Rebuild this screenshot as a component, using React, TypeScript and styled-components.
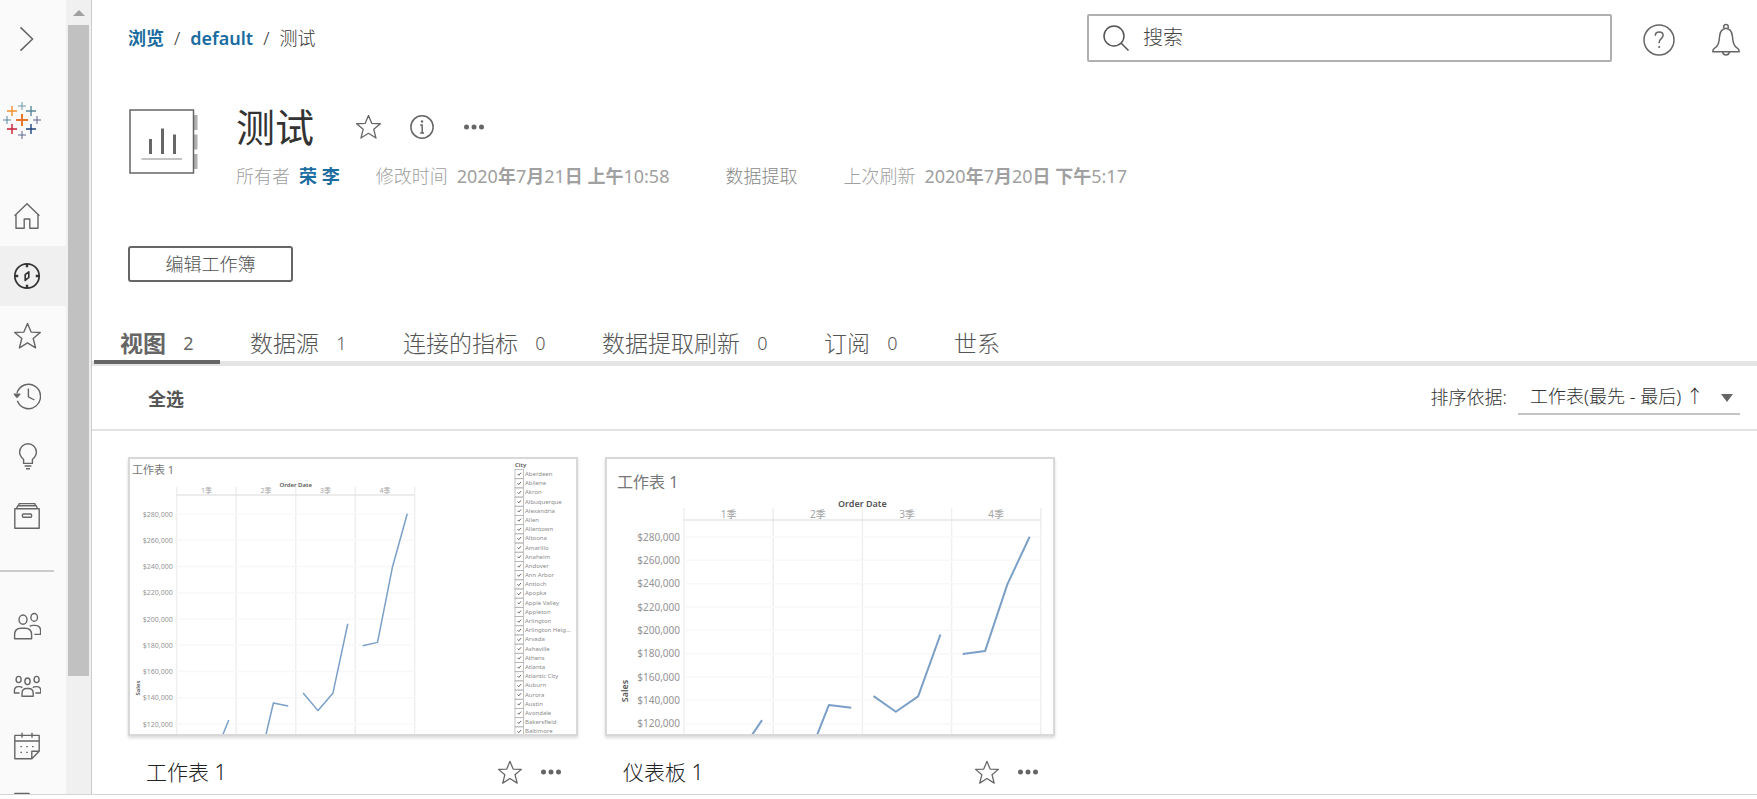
import React from "react";
import styled, { createGlobalStyle } from "styled-components";

const GlobalStyle = createGlobalStyle`
  *, *::before, *::after { box-sizing: border-box; }
  body {
    margin: 0;
    background: #fff;
    color: #333;
    font-family: "Noto Sans", "Noto Sans CJK SC", sans-serif;
    font-size: 18px;
    line-height: 24px;
  }
  button, input, select { font: inherit; color: inherit; }
  ul, ol { list-style: none; margin: 0; padding: 0; }
`;

const Frame = styled.div`
  display: flex;
  height: calc(100vh - 4px);
  overflow: hidden;
  border-bottom: 1px solid #d4d4d4;
`;

const Sidebar = styled.nav`
  display: flex;
  flex: none;
  width: 92px;
  border-right: 1px solid #ccc;
`;

const SideContent = styled.div`
  flex: 1;
  overflow: hidden;
  background: #fafafa;
`;

const IconButton = styled.button`
  display: flex;
  align-items: center;
  justify-content: center;
  flex: none;
  padding: 0;
  border: 0;
  background: none;
  color: #666;
`;

const SideToggle = styled(IconButton)`
  width: 54px;
  height: 78px;
`;

const LogoLink = styled.a`
  display: flex;
  align-items: center;
  height: 108px;
  padding-bottom: 24px;
`;

const SideItem = styled.a<{ $current?: boolean }>`
  display: flex;
  align-items: center;
  height: 60px;
  padding-left: 13px;
  color: ${(p) => (p.$current ? "#333" : "#666")};
  background: ${(p) => (p.$current ? "#f0f0f0" : "transparent")};
`;

const SideDivider = styled.hr`
  width: 54px;
  height: 2px;
  margin: 24px 0;
  border: 0;
  background: #ccc;
`;

const ScrollTrack = styled.div`
  display: flex;
  flex-direction: column;
  flex: none;
  width: 25px;
  padding: 0 2px;
  background: #f0f0f0;
`;

const ScrollArrow = styled.div`
  display: flex;
  align-items: center;
  justify-content: center;
  height: 25px;
`;

const ScrollThumb = styled.div`
  width: 21px;
  height: 82%;
  background: #c1c1c1;
`;

const Main = styled.main`
  flex: 1;
  min-width: 0;
`;

const TopBar = styled.header`
  display: flex;
  align-items: center;
  padding: 14px 17px 0 36px;
`;

const Crumbs = styled.ol`
  display: flex;
  gap: 10px;
  margin-right: auto;
  color: #333;
  font-weight: 300;
`;

const BlueLink = styled.a`
  color: #1b6ca1;
  font-weight: 600;
  text-decoration: none;
`;

const SearchBox = styled.label`
  display: flex;
  align-items: center;
  gap: 14px;
  flex: 0 1 525px;
  height: 48px;
  padding: 0 14px;
  border: 2px solid #b0b0b0;
  border-radius: 2px;
  color: #555;
`;

const SearchInput = styled.input`
  flex: 1;
  min-width: 0;
  padding: 0;
  border: 0;
  outline: 0;
  background: none;
  font-size: 20px;
  font-weight: 300;
  &::placeholder { color: #444; opacity: 1; }
`;

const TopIcon = styled(IconButton)`
  margin-left: 31px;
  padding-top: 4px;
`;

const WorkbookHeader = styled.section`
  display: flex;
  gap: 38px;
  padding: 45px 36px 0;
`;

const WorkbookIcon = styled.svg`
  flex: none;
  margin-top: 2px;
`;

const TitleLine = styled.div`
  display: flex;
  align-items: center;
  gap: 28px;
`;

const Title = styled.h1`
  margin: 0 13px 0 0;
  font-size: 39px;
  font-weight: 400;
  line-height: 40px;
`;

const Meta = styled.dl`
  display: flex;
  flex-wrap: wrap;
  margin: 17px 0 0;
  color: #a0a0a0;
`;

const MetaItem = styled.div<{ $after: number }>`
  display: flex;
  gap: 9px;
  margin-right: ${(p) => p.$after}px;
`;

const Term = styled.dt<{ $dark?: boolean }>`
  color: ${(p) => (p.$dark ? "#888" : "#a0a0a0")};
  font-weight: 300;
`;

const Detail = styled.dd`
  margin: 0;
`;

const Strong = styled.b`
  font-weight: 600;
`;

const EditButton = styled.button`
  display: block;
  width: 165px;
  height: 36px;
  margin: 58px 36px 36px;
  padding: 0;
  border: 2px solid #666;
  border-radius: 3px;
  background: #fff;
  color: #555;
  font-weight: 300;
`;

const Tabs = styled.div`
  display: flex;
  gap: 4px;
  height: 48px;
  padding-left: 2px;
  border-bottom: 5px solid #e5e5e5;
`;

const Tab = styled.button<{ $active?: boolean }>`
  display: flex;
  align-items: center;
  gap: 17px;
  height: 46px;
  padding: 8px 26px 0;
  border: 0;
  border-bottom: 4px solid ${(p) => (p.$active ? "#666" : "transparent")};
  background: none;
  color: ${(p) => (p.$active ? "#666" : "#555")};
  font-size: 23px;
  font-weight: ${(p) => (p.$active ? 600 : 300)};
  white-space: nowrap;
`;

const TabCount = styled.span<{ $active?: boolean }>`
  min-width: 11px;
  font-size: 18px;
  font-weight: ${(p) => (p.$active ? 400 : 300)};
`;

const Toolbar = styled.div`
  display: flex;
  align-items: center;
  justify-content: space-between;
  height: 65px;
  padding: 0 17px 2px 56px;
  border-bottom: 2px solid #e2e2e2;
`;

const SelectAll = styled.button`
  padding: 4px 0 0;
  border: 0;
  background: none;
  color: #555;
  font-weight: 600;
`;

const SortField = styled.div`
  display: flex;
  align-items: center;
  gap: 11px;
  font-weight: 300;
`;

const SelectWrap = styled.div`
  display: flex;
  align-items: center;
  width: 222px;
  height: 36px;
  border-bottom: 2px solid #c4c4c4;
`;

const Select = styled.select`
  flex: 1;
  min-width: 0;
  height: 34px;
  margin-right: -20px;
  padding: 0 20px 0 12px;
  border: 0;
  appearance: none;
  background: none;
  font-weight: 300;
`;

const Caret = styled.svg`
  flex: none;
  margin: 4px 7px 0 0;
  pointer-events: none;
`;

const Cards = styled.ul`
  display: flex;
  flex-wrap: wrap;
  gap: 27px;
  padding: 26px 36px;
`;

const Card = styled.li`
  width: 450px;
`;

const Thumb = styled.a`
  display: block;
  height: 279px;
  border: 2px solid #d8d8d8;
  box-shadow: 0 2px 3px rgba(0, 0, 0, 0.15);
`;

const ThumbArt = styled.svg`
  display: block;
  width: 100%;
  height: 100%;
  fill: #8c8c8c;
`;

const Caption = styled.div`
  display: flex;
  align-items: center;
  gap: 18px;
  height: 72px;
  padding: 0 16px 0 18px;
`;

const CardName = styled.a`
  margin-right: auto;
  color: #222;
  font-size: 21px;
  font-weight: 300;
  text-decoration: none;
`;

type IconProps = { size?: number; children: React.ReactNode };

const Icon = ({ size = 28, children }: IconProps) => (
  <svg
    width={size}
    height={size}
    viewBox="0 0 28 28"
    fill="none"
    stroke="currentColor"
    strokeWidth="1.4"
    strokeLinejoin="round"
    aria-hidden="true"
  >
    {children}
  </svg>
);

const starPath =
  "M14.5 1.5l3.6 8.6 9.2.4-7.1 6 2.4 9.4-8.1-5.1-8.1 5.1 2.4-9.4-7.1-6 9.2-.4z";

const StarIcon = ({ size }: { size?: number }) => (
  <Icon size={size}>
    <path d={starPath} />
  </Icon>
);

const InfoIcon = () => (
  <Icon size={26}>
    <circle cx="14" cy="14" r="12" strokeWidth="1.6" />
    <path d="M12 11.8h2.200v8.600M12 20.4h4.200" strokeWidth="1.6" />
    <circle cx="14" cy="8" r="1.3" fill="currentColor" stroke="none" />
  </Icon>
);

const DotsIcon = () => (
  <svg width="22" height="22" viewBox="0 0 22 22" fill="currentColor" aria-hidden="true">
    <circle cx="3.500" cy="11" r="2.500" />
    <circle cx="11" cy="11" r="2.500" />
    <circle cx="18.500" cy="11" r="2.500" />
  </svg>
);

const HomeIcon = () => (
  <Icon>
    <path d="M1.6 13.8L14 1.8l12.4 12M3 12.6v13.6h8.2V17h5.6v9.2H25V12.6" />
  </Icon>
);

const CompassIcon = () => (
  <Icon>
    <circle cx="14" cy="14" r="12.2" strokeWidth="1.7" />
    <path d="M14 2v3.2M14 22.8V26M2 14h3.2M22.8 14H26" strokeWidth="2.4" />
    <path d="M15.8 9.8v5.6l-3.6 3v-5.8z" strokeWidth="1.7" />
  </Icon>
);

const HistoryIcon = () => (
  <Icon>
    <path d="M4 11a12 12.2 0 1 1 .3 7.8" />
    <path d="M1.4 12.2h5.4L4 15.2z" fill="currentColor" />
    <path d="M15.4 6.4v8.4l6 3.2" />
  </Icon>
);

const BulbIcon = () => (
  <Icon>
    <path d="M10.6 21.4v-4c-2.2-2-4-3.800-4-7.200a8.400 8.400 0 0 1 16.800 0c0 3.400-1.800 5.200-4 7.200v4z" />
    <path d="M11.600 24h6.800M13 26.800h4" />
  </Icon>
);

const ArchiveIcon = () => (
  <Icon>
    <path d="M1.800 6.800h24.400v19.400H1.800zM3.400 6.800l1.400-3h18.400l1.400 3M5.400 3.800l.8-2.200h15.600l.8 2.200" />
    <rect x="9.400" y="12" width="9.200" height="3.200" rx="1" />
  </Icon>
);

const UsersIcon = () => (
  <Icon>
    <ellipse cx="10" cy="7.600" rx="4" ry="4.600" />
    <ellipse cx="21.200" cy="5.400" rx="3.300" ry="3.900" />
    <path d="M1.600 26.800v-4c0-4.400 2.600-6.600 6.400-6.600h4.200c3.800 0 6.400 2.200 6.400 6.600v4z" />
    <path d="M16.800 14.200c1-.6 2.200-.8 3.400-.8h1.600c3.600 0 5.800 1.600 5.800 5.400v3.600h-6.200" />
  </Icon>
);

const GroupsIcon = () => (
  <Icon>
    <ellipse cx="14.500" cy="9.300" rx="2.600" ry="3.300" />
    <ellipse cx="5.600" cy="7.500" rx="2.500" ry="3.100" />
    <ellipse cx="23.600" cy="7.500" rx="2.500" ry="3.100" />
    <path d="M9 24.300v-2.800c0-3.400 1.800-5 4.600-5h2c2.800 0 4.600 1.600 4.600 5v2.800z" />
    <path d="M9.400 15.600c-1-.8-2-1-3-1h-1c-2.600 0-4 1.600-4 4.200v2.200h5.200M19.800 15.600c1-.8 2-1 3-1h1c2.600 0 4 1.600 4 4.200v2.200h-5.400" />
  </Icon>
);

const CalendarIcon = () => (
  <Icon>
    <path d="M18.800 26.800h-17V3.400h24.400v15.800zM18.800 26.800v-7.600h7.400M1.800 9h24.400M9 .8v5M19 .8v5" />
    <path d="M7.400 14.600h1.600M13.200 14.600h1.600M19 14.600h1.600M7.400 20.400h1.600M13.200 20.400h1.600" />
  </Icon>
);

const DocumentIcon = () => (
  <Icon>
    <path d="M1.800 26V1.500h14l3 3V26z" />
  </Icon>
);

const LogoMark = () => {
  const marks: [number, number, number, number, string][] = [
    [22, 20, 6, 2, "#e8762d"],
    [12, 11, 5, 1.4, "#eb912c"],
    [31, 11, 5, 1.4, "#59879b"],
    [12, 29, 5, 1.4, "#c72037"],
    [31, 29, 5, 1.4, "#1f447e"],
    [22, 6, 4, 1, "#7199a6"],
    [7, 20, 4, 1, "#59879b"],
    [37, 20, 4, 1, "#5b6591"],
    [22, 35, 4, 1, "#5b6591"],
  ];
  return (
    <svg width="44" height="40" viewBox="0 0 44 40" fill="none" aria-hidden="true">
      {marks.map(([x, y, r, w, color], i) => (
        <path key={i} d={`M${x - r} ${y}h${2 * r}M${x} ${y - r}v${2 * r}`} stroke={color} strokeWidth={w} />
      ))}
    </svg>
  );
};

const quarters: { label: string; sales: number[]; from: number }[] = [
  { label: "1季", sales: [94900, 123000], from: 2 },
  { label: "2季", sales: [87700, 136000, 133700], from: 1 },
  { label: "3季", sales: [143600, 130200, 143400, 196400], from: 0 },
  { label: "4季", sales: [179700, 182200, 239400, 280200], from: 0 },
];

const ticks = [280, 260, 240, 220, 200, 180, 160, 140, 120];

const cities = [
  "Aberdeen", "Abilene", "Akron", "Albuquerque", "Alexandria", "Allen", "Allentown",
  "Altoona", "Amarillo", "Anaheim", "Andover", "Ann Arbor", "Antioch", "Apopka",
  "Apple Valley", "Appleton", "Arlington", "Arlington Heig...", "Arvada", "Asheville",
  "Athens", "Atlanta", "Atlantic City", "Auburn", "Aurora", "Austin", "Avondale",
  "Bakersfield", "Baltimore",
];

type ChartProps = {
  left: number;
  column: number;
  top: number;
  rule: number;
  first: number;
  step: number;
  labelSize: number;
  headSize: number;
  titleSize: number;
  title: [number, number];
  side: [number, number];
  line: number;
};

const SalesChart = (c: ChartProps) => {
  const right = c.left + 4 * c.column;
  const yOf = (sales: number) => c.first + ((280000 - sales) / 20000) * c.step;
  return (
    <g>
      <g stroke="#efefef" strokeWidth="1.500">
        {[0, 1, 2, 3, 4].map((i) => (
          <path key={i} d={`M${c.left + i * c.column} ${c.top}V275`} />
        ))}
        <path d={`M${c.left} ${c.rule}H${right}`} stroke="#e6e6e6" />
        {ticks.map((t) => (
          <path key={t} d={`M${c.left} ${yOf(t * 1000)}H${right}`} stroke="#f8f8f8" />
        ))}
      </g>
      <text x={c.title[0]} y={c.title[1]} fontSize={c.titleSize} fill="#777">
        工作表 1
      </text>
      <text
        x={c.left + 2 * c.column}
        y={c.top + 0.5 - c.headSize / 6}
        fontSize={c.headSize}
        fontWeight="600"
        fill="#555"
        textAnchor="middle"
      >
        Order Date
      </text>
      {quarters.map((q, i) => (
        <text
          key={q.label}
          x={c.left + (i + 0.5) * c.column}
          y={c.rule - 2}
          fontSize={c.labelSize}
          fill="#a4a4a4"
          textAnchor="middle"
        >
          {q.label}
        </text>
      ))}
      {ticks.map((t) => (
        <text
          key={t}
          x={c.left - 4}
          y={yOf(t * 1000) + c.labelSize * 0.36}
          fontSize={c.labelSize}
          fill="#949494"
          textAnchor="end"
        >
          {`$${t},000`}
        </text>
      ))}
      <text
        transform={`translate(${c.side[0]} ${c.side[1]}) rotate(-90)`}
        fontSize={c.headSize}
        fontWeight="600"
        fill="#555"
        textAnchor="middle"
      >
        Sales
      </text>
      {quarters.map((q, i) => (
        <polyline
          key={q.label}
          fill="none"
          stroke="#7b9fc6"
          strokeWidth={c.line}
          strokeLinejoin="round"
          points={q.sales
            .map((v, k) => `${c.left + (i + 0.125 + 0.25 * (k + q.from)) * c.column},${yOf(v)}`)
            .join(" ")}
        />
      ))}
    </g>
  );
};

const CityFilter = () => (
  <g fontSize="6">
    <text x="385" y="8" fontWeight="600" fill="#555">
      City
    </text>
    {cities.map((city, i) => {
      const y = 15 + i * 9.19;
      return (
        <g key={city}>
          <rect x="385" y={y - 4.5} width="8.5" height="9.19" fill="none" stroke="#b4b4b4" strokeWidth="0.8" />
          <path d={`M387.5 ${y}l1.3 1.3 2.2-2.6`} fill="none" stroke="#555" strokeWidth="0.9" />
          <text x="395" y={y + 2}>
            {city}
          </text>
        </g>
      );
    })}
  </g>
);

const sideItems = [
  { label: "主页", icon: <HomeIcon /> },
  { label: "浏览", icon: <CompassIcon />, current: true },
  { label: "收藏夹", icon: <StarIcon /> },
  { label: "最近", icon: <HistoryIcon /> },
  { label: "建议", icon: <BulbIcon /> },
  { label: "集合", icon: <ArchiveIcon /> },
];

const adminItems = [
  { label: "用户", icon: <UsersIcon /> },
  { label: "群组", icon: <GroupsIcon /> },
  { label: "计划", icon: <CalendarIcon /> },
  { label: "任务", icon: <DocumentIcon /> },
];

const tabs: { label: string; count?: number }[] = [
  { label: "视图", count: 2 },
  { label: "数据源", count: 1 },
  { label: "连接的指标", count: 0 },
  { label: "数据提取刷新", count: 0 },
  { label: "订阅", count: 0 },
  { label: "世系" },
];

const ViewCard = ({ name, children }: { name: string; children: React.ReactNode }) => (
  <Card>
    <Thumb href="#" aria-label={name}>
      <ThumbArt viewBox="0 0 446 275">{children}</ThumbArt>
    </Thumb>
    <Caption>
      <CardName href="#">{name}</CardName>
      <IconButton aria-label="收藏">
        <StarIcon size={25} />
      </IconButton>
      <IconButton aria-label="更多操作">
        <DotsIcon />
      </IconButton>
    </Caption>
  </Card>
);

export default function App() {
  return (
    <>
      <GlobalStyle />
      <Frame>
        <Sidebar aria-label="导航">
          <SideContent>
            <SideToggle aria-label="展开">
              <Icon size={26}>
                <path d="M7 1.5l13 12.5L7 26.5" strokeWidth="1.7" />
              </Icon>
            </SideToggle>
            <LogoLink href="#" aria-label="主页">
              <LogoMark />
            </LogoLink>
            {sideItems.map((item) => (
              <SideItem key={item.label} href="#" aria-label={item.label} $current={item.current}>
                {item.icon}
              </SideItem>
            ))}
            <SideDivider />
            {adminItems.map((item) => (
              <SideItem key={item.label} href="#" aria-label={item.label}>
                {item.icon}
              </SideItem>
            ))}
          </SideContent>
          <ScrollTrack aria-hidden="true">
            <ScrollArrow>
              <svg width="12" height="6" viewBox="0 0 12 6" fill="#a0a0a0">
                <path d="M0 6L6 0l6 6z" />
              </svg>
            </ScrollArrow>
            <ScrollThumb />
          </ScrollTrack>
        </Sidebar>
        <Main>
          <TopBar>
            <Crumbs>
              <li><BlueLink href="#">浏览</BlueLink></li>
              <li aria-hidden="true">/</li>
              <li><BlueLink href="#">default</BlueLink></li>
              <li aria-hidden="true">/</li>
              <li>测试</li>
            </Crumbs>
            <SearchBox>
              <svg width="26" height="26" viewBox="0 0 26 26" fill="none" stroke="currentColor" strokeWidth="1.5" aria-hidden="true">
                <circle cx="11" cy="11" r="10" />
                <path d="M18.2 18.2l7.3 7.3" />
              </svg>
              <SearchInput type="search" placeholder="搜索" aria-label="搜索" />
            </SearchBox>
            <TopIcon aria-label="帮助">
              <svg width="32" height="32" viewBox="0 0 32 32" fill="none" stroke="currentColor" strokeWidth="1.5" aria-hidden="true">
                <circle cx="16" cy="16" r="15" />
                <path d="M12.3 11.8c0-2.4 1.6-3.7 3.9-3.7 2.4 0 3.9 1.4 3.9 3.4 0 3-3.9 3.4-3.9 6.8v.9" />
                <path d="M15.3 23h1.8" strokeWidth="1.8" />
              </svg>
            </TopIcon>
            <TopIcon aria-label="通知">
              <svg width="34" height="34" viewBox="2 0 34 34" fill="none" stroke="currentColor" strokeWidth="1.5" strokeLinejoin="round" aria-hidden="true">
                <path d="M22 5.2c4.2.6 6 3.8 6.4 8 .6 6.4 1.2 9.8 5.2 12.2 1.4.8 1.6 2 1.6 3.4H8.8c0-1.4.2-2.6 1.6-3.4 4-2.4 4.6-5.8 5.2-12.2.4-4.2 2.2-7.4 6.4-8z" />
                <path d="M19.8 5.6V3.4c0-1.4 1-2 2.2-2s2.2.6 2.2 2v2.2M18.600 29c.4 1.800 1.600 3 3.400 3s3-1.200 3.400-3" />
              </svg>
            </TopIcon>
          </TopBar>

          <WorkbookHeader>
            <WorkbookIcon width="70" height="66" viewBox="0 0 70 66" fill="none" aria-hidden="true">
              <path d="M67 6v15M67 25.5v15M67 45v15" stroke="#b0b0b0" strokeWidth="5" />
              <rect x="2" y="1" width="63.5" height="63" fill="#fff" stroke="#666" strokeWidth="1.5" />
              <path d="M22.5 30v15M34.500 19.500V45M46.500 25.500V45" stroke="#666" strokeWidth="3" />
              <path d="M13.5 50h40.5" stroke="#b0b0b0" strokeWidth="1.5" />
            </WorkbookIcon>
            <div>
              <TitleLine>
                <Title>测试</Title>
                <IconButton aria-label="收藏"><StarIcon size={26} /></IconButton>
                <IconButton aria-label="详细信息"><InfoIcon /></IconButton>
                <IconButton aria-label="更多操作"><DotsIcon /></IconButton>
              </TitleLine>
              <Meta>
                <MetaItem $after={36}>
                  <Term>所有者</Term>
                  <Detail><BlueLink href="#">荣 李</BlueLink></Detail>
                </MetaItem>
                <MetaItem $after={56}>
                  <Term>修改时间</Term>
                  <Detail>
                    2020<Strong>年</Strong>7<Strong>月</Strong>21<Strong>日 上午</Strong>10:58
                  </Detail>
                </MetaItem>
                <MetaItem $after={46}>
                  <Term $dark>数据提取</Term>
                </MetaItem>
                <MetaItem $after={0}>
                  <Term>上次刷新</Term>
                  <Detail>
                    2020<Strong>年</Strong>7<Strong>月</Strong>20<Strong>日 下午</Strong>5:17
                  </Detail>
                </MetaItem>
              </Meta>
            </div>
          </WorkbookHeader>

          <EditButton>编辑工作簿</EditButton>

          <Tabs role="tablist">
            {tabs.map((tab, i) => (
              <Tab key={tab.label} role="tab" aria-selected={i === 0} $active={i === 0}>
                {tab.label}
                {tab.count !== undefined && <TabCount $active={i === 0}>{tab.count}</TabCount>}
              </Tab>
            ))}
          </Tabs>

          <Toolbar>
            <SelectAll>全选</SelectAll>
            <SortField>
              <label htmlFor="sort">排序依据:</label>
              <SelectWrap>
                <Select id="sort" defaultValue="sheet">
                  <option value="sheet">工作表(最先 - 最后) ↑</option>
                </Select>
                <Caret width="12" height="8" viewBox="0 0 12 8" fill="#666">
                  <path d="M0 0h12L6 8z" />
                </Caret>
              </SelectWrap>
            </SortField>
          </Toolbar>

          <Cards>
            <ViewCard name="工作表 1">
              <SalesChart
                left={46.7}
                column={59.5}
                top={28}
                rule={36}
                first={55}
                step={26.25}
                labelSize={7}
                headSize={6}
                titleSize={11}
                title={[2, 15]}
                side={[10, 229]}
                line={1.5}
              />
              <CityFilter />
            </ViewCard>
            <ViewCard name="仪表板 1">
              <SalesChart
                left={77}
                column={89.2}
                top={49}
                rule={61}
                first={78}
                step={23.33}
                labelSize={10}
                headSize={9}
                titleSize={16}
                title={[10, 29]}
                side={[21, 232]}
                line={2}
              />
            </ViewCard>
          </Cards>
        </Main>
      </Frame>
    </>
  );
}
